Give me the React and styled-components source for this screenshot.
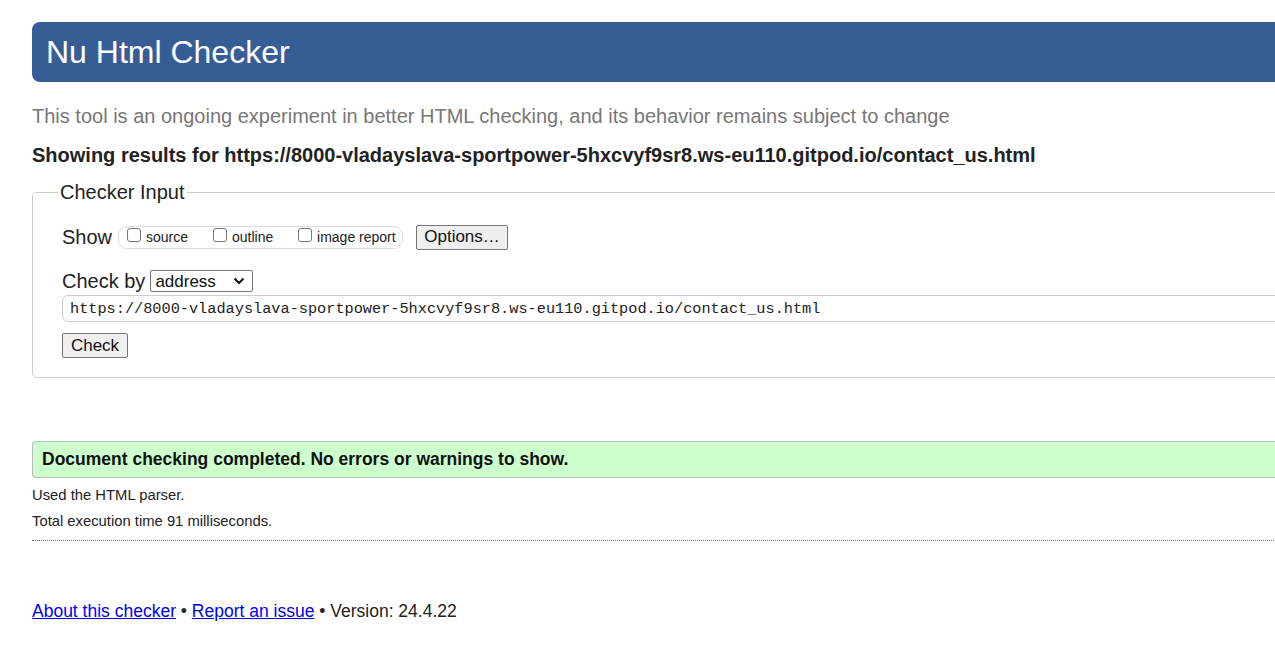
import React from "react";
import styled, { createGlobalStyle } from "styled-components";

const Global = createGlobalStyle`
  html, body { margin: 0; padding: 0; background: #fff; overflow: hidden; }
  body { font-family: "Liberation Sans", Arial, sans-serif; color: #222; }
`;

const Page = styled.div`
  width: 1500px;
  padding: 22px 0 0 32px;
  display: flex;
  flex-direction: column;
`;

const Header = styled.h1`
  margin: 0;
  height: 60px;
  display: flex;
  align-items: center;
  padding-left: 14px;
  padding-top: 1px;
  box-sizing: border-box;
  background: #365d96;
  color: #fff;
  font-size: 32px;
  font-weight: normal;
  border-radius: 8px 0 0 8px;
`;

const Intro = styled.p`
  margin: 21px 0 0;
  font-size: 20px;
  line-height: 26px;
  color: #777;
`;

const Showing = styled.p`
  margin: 13px 0 0;
  font-size: 20px;
  line-height: 26px;
  font-weight: bold;
  color: #222;
`;

const Fieldset = styled.fieldset`
  margin: 12px 0 0;
  padding: 20px 0 19px 29px;
  border: 1px solid #ccc;
  border-radius: 5px;
  display: flex;
  flex-direction: column;
  align-items: flex-start;
`;

const Legend = styled.legend`
  margin-left: -4px;
  padding: 0 2px;
  font-size: 20px;
  line-height: 24px;
  color: #222;
`;

const Row = styled.div`
  display: flex;
  align-items: center;
  height: ${(p) => p.$h || 26}px;
  margin-top: ${(p) => p.$mt || 0}px;
`;

const Label = styled.span`
  font-size: 20px;
  color: #222;
  margin-right: ${(p) => p.$mr || 4}px;
`;

const CheckGroup = styled.div`
  display: flex;
  align-items: center;
  height: 21px;
  width: 275px;
  padding-left: 8px;
  box-sizing: content-box;
  border: 1px solid #ddd;
  border-radius: 9px;
`;

const CheckItem = styled.label`
  display: flex;
  align-items: center;
  width: ${(p) => p.$w}px;
  font-size: 14px;
  color: #222;
`;

const Box = styled.input.attrs({ type: "checkbox" })`
  appearance: none;
  margin: 0 5px 4px 0;
  width: 14px;
  height: 14px;
  border: 1px solid #767676;
  border-radius: 3px;
  background: #fff;
  box-sizing: border-box;
`;

const Button = styled.button`
  margin-left: ${(p) => p.$ml || 0}px;
  height: 25px;
  width: ${(p) => p.$w}px;
  padding: 0;
  background: #efefef;
  border: 1px solid #767676;
  border-radius: 2px;
  font-family: "Liberation Sans", Arial, sans-serif;
  font-size: 17px;
  color: #111;
`;

const SelectWrap = styled.div`
  position: relative;
  width: 103px;
  height: 22px;
`;

const Select = styled.select`
  appearance: none;
  width: 103px;
  height: 22px;
  padding: 0 0 0 4px;
  border: 1px solid #767676;
  border-radius: 2px;
  background: #fff;
  font-family: "Liberation Sans", Arial, sans-serif;
  font-size: 17px;
  color: #111;
`;

const Chevron = styled.svg`
  position: absolute;
  right: 8px;
  top: 7px;
  pointer-events: none;
`;

const UrlInput = styled.input`
  margin-top: 3px;
  width: 1400px;
  height: 27px;
  box-sizing: border-box;
  padding: 0 0 0 7px;
  border: 1px solid #ccc;
  border-radius: 6px;
  font-family: "Liberation Mono", "Courier New", monospace;
  font-size: 15.25px;
  color: #222;
`;

const Success = styled.div`
  margin-top: 63px;
  height: 37px;
  box-sizing: border-box;
  display: flex;
  align-items: center;
  padding-left: 9px;
  background: #ccffcc;
  border: 1px solid #bbb;
  border-right: none;
  border-radius: 4px 0 0 4px;
  font-size: 17.5px;
  font-weight: bold;
  color: #111;
`;

const Note = styled.p`
  margin: ${(p) => p.$mt}px 0 0;
  font-size: 14.8px;
  line-height: 18px;
  color: #222;
`;

const Divider = styled.hr`
  margin: 10px 0 0;
  border: none;
  border-top: 1px dotted #666;
  height: 0;
`;

const Footer = styled.p`
  margin: 59px 0 0;
  font-size: 17.5px;
  line-height: 22px;
  color: #222;
`;

const Link = styled.a`
  color: #0000ee;
  text-decoration: underline;
`;

export default function App() {
  const url =
    "https://8000-vladayslava-sportpower-5hxcvyf9sr8.ws-eu110.gitpod.io/contact_us.html";
  return (
    <>
      <Global />
      <Page>
        <Header>Nu Html Checker</Header>
        <Intro>
          This tool is an ongoing experiment in better HTML checking, and its
          behavior remains subject to change
        </Intro>
        <Showing>Showing results for {url}</Showing>
        <Fieldset>
          <Legend>Checker Input</Legend>
          <Row $h={26}>
            <Label $mr={6}>Show</Label>
            <CheckGroup>
              <CheckItem $w={86}>
                <Box />
                source
              </CheckItem>
              <CheckItem $w={85}>
                <Box />
                outline
              </CheckItem>
              <CheckItem $w={104}>
                <Box />
                image report
              </CheckItem>
            </CheckGroup>
            <Button $ml={13} $w={92}>Options…</Button>
          </Row>
          <Row $h={22} $mt={20}>
            <Label $mr={5}>Check by</Label>
            <SelectWrap>
              <Select defaultValue="address">
                <option value="address">address</option>
                <option value="upload">file upload</option>
                <option value="text">text input</option>
              </Select>
              <Chevron width="12" height="8" viewBox="0 0 12 8">
                <path d="M1.5 1.5 L6 6 L10.5 1.5" fill="none" stroke="#111" strokeWidth="2" />
              </Chevron>
            </SelectWrap>
          </Row>
          <UrlInput defaultValue={url} />
          <Row $h={25} $mt={11}>
            <Button $w={66}>Check</Button>
          </Row>
        </Fieldset>
        <Success>Document checking completed. No errors or warnings to show.</Success>
        <Note $mt={8}>Used the HTML parser.</Note>
        <Note $mt={8}>Total execution time 91 milliseconds.</Note>
        <Divider />
        <Footer>
          <Link href="#">About this checker</Link> • <Link href="#">Report an issue</Link> •
          Version: 24.4.22
        </Footer>
      </Page>
    </>
  );
}
